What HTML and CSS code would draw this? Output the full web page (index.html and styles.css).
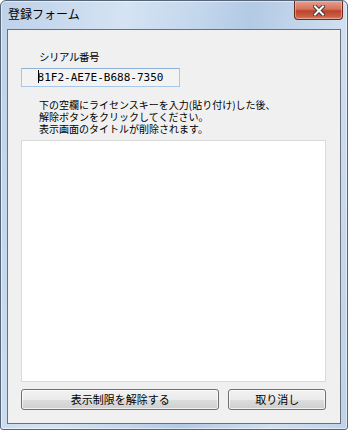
FILE: index.html
```html
<!DOCTYPE html>
<html>
  <head>
    <title>登録フォーム</title>
    <link rel="stylesheet" href="styles.css">
  </head>
  <body>
    <div class="window">
      <div class="titlebar">
        <span class="title">登録フォーム</span>
        <div class="close-btn">
          <svg width="12" height="11" viewBox="0 0 12 11">
            <path d="M2 1.5 L10 9.5 M10 1.5 L2 9.5" stroke="#3a3a3a" stroke-width="4" stroke-linecap="square" fill="none"/>
            <path d="M2 1.5 L10 9.5 M10 1.5 L2 9.5" stroke="#ffffff" stroke-width="2" stroke-linecap="square" fill="none"/>
          </svg>
        </div>
      </div>

      <div class="client">
        <div class="field-label">シリアル番号</div>
        <div class="serial"><span class="caret"></span>81F2-AE7E-B688-7350</div>

        <p class="notice">
          下の空欄にライセンスキーを入力(貼り付け)した後、<br>
          解除ボタンをクリックしてください。<br>
          表示画面のタイトルが削除されます。
        </p>

        <div class="license-box"></div>

        <div class="buttons">
          <button class="btn btn-unlock">表示制限を解除する</button>
          <button class="btn btn-cancel">取り消し</button>
        </div>
      </div>
    </div>
  </body>
</html>
```

FILE: styles.css
```css
body {
  margin: 0;
  font-family: "Noto Sans CJK JP", "Liberation Sans", sans-serif;
  background-color: #ffffff;
}

.window {
  width: 348px;
  height: 430px;
  box-sizing: border-box;
  border: 1px solid #566578;
  border-radius: 6px 6px 3px 3px;
  padding: 0 6px 6px 6px;
  background: linear-gradient(100deg, #bdd1e9 0%, #d5e3f3 30%, #c2d6ec 48%, #b3cae4 60%, #d0dff1 82%, #bfd2e9 100%);
  box-shadow: inset 0 0 0 1px rgba(255, 255, 255, 0.55);
  overflow: hidden;
}

.titlebar {
  height: 28px;
  display: flex;
  align-items: flex-start;
}

.title {
  margin: 5px 0 0 1px;
  font-size: 12px;
  line-height: 16px;
  color: #000;
}

.close-btn {
  margin-left: auto;
  margin-right: -2px;
  width: 49px;
  height: 19px;
  box-sizing: border-box;
  border: 1px solid #6b2a20;
  border-top: none;
  border-radius: 0 0 4px 4px;
  background: linear-gradient(#e6a090 0%, #d4735c 45%, #bd4329 55%, #c95f45 85%, #da8469 100%);
  box-shadow: inset 0 0 0 1px rgba(255, 210, 200, 0.45);
  display: flex;
  align-items: center;
  justify-content: center;
}

.client {
  height: 395px;
  box-sizing: border-box;
  border: 1px solid #66727f;
  background-color: #f0f0f0;
  padding: 20px 14px 13px 13px;
  display: flex;
  flex-direction: column;
}

.field-label {
  margin-left: 18px;
  font-size: 10.5px;
  line-height: 13px;
  letter-spacing: -0.5px;
  color: #000;
}

.serial {
  margin-top: 5px;
  width: 159px;
  height: 19px;
  box-sizing: border-box;
  border: 1px solid #a9c7e6;
  border-top-color: #8fb1d6;
  background-color: #f3f3f3;
  font-family: "DejaVu Sans Mono", "Liberation Mono", monospace;
  font-size: 11px;
  line-height: 17px;
  text-align: center;
  color: #000;
}

.caret {
  display: inline-block;
  width: 0;
  height: 13px;
  border-left: 1px solid #000;
  margin-right: -1px;
  vertical-align: -2px;
}

.notice {
  margin: 12px 0 0 18px;
  font-size: 10px;
  line-height: 12px;
  color: #000;
  height: 36px;
}

.license-box {
  margin-top: 5px;
  height: 242px;
  box-sizing: border-box;
  border: 1px solid #dadada;
  background-color: #fff;
}

.buttons {
  margin-top: 7px;
  display: flex;
  gap: 9px;
}

.btn {
  height: 21px;
  box-sizing: border-box;
  border: 1px solid #707070;
  border-radius: 3px;
  background: linear-gradient(#f2f2f2 0%, #ebebeb 50%, #dddddd 51%, #cfcfcf 100%);
  box-shadow: inset 0 0 0 1px rgba(255, 255, 255, 0.7);
  font-family: "Noto Sans CJK JP", "Liberation Sans", sans-serif;
  font-size: 11px;
  line-height: 17px;
  padding: 0;
  color: #000;
}

.btn-unlock {
  width: 199px;
}

.btn-cancel {
  width: 98px;
}
```
